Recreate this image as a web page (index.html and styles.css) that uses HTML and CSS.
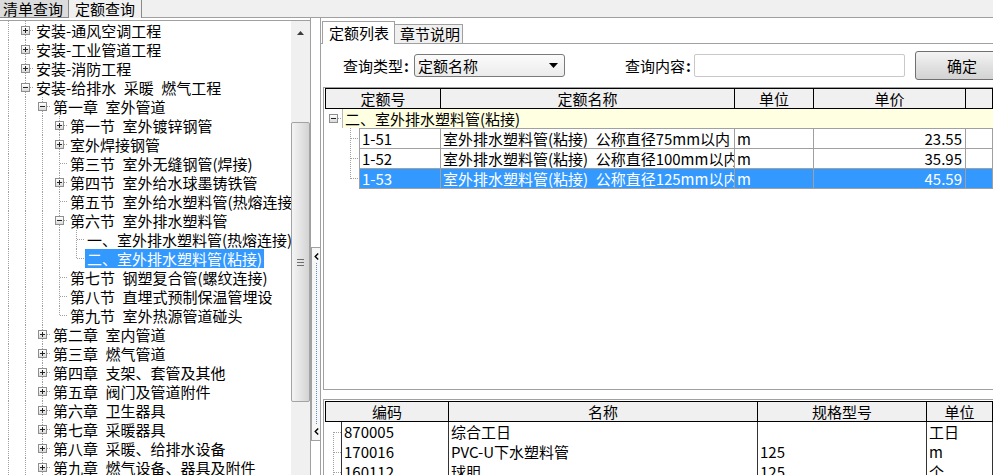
FILE: index.html
```html
<!DOCTYPE html>
<html lang="zh-CN">
<head>
    <meta charset="UTF-8">
    <title>定额查询</title>
    <link rel="stylesheet" href="styles.css">
</head>
<body>
    <div class="topbar">
        <div class="ttab">清单查询</div>
        <div class="ttab active">定额查询</div>
        <div class="tfill"></div>
    </div>

    <div class="main">
        <!-- chapter tree -->
        <div class="left">
            <div class="treebox">
                <div class="tree">
                    <div class="trow"><span class="tc v"></span><span class="tc t"><i class="bx p"></i></span><span class="tx">安装-通风空调工程</span></div>
                    <div class="trow"><span class="tc v"></span><span class="tc t"><i class="bx p"></i></span><span class="tx">安装-工业管道工程</span></div>
                    <div class="trow"><span class="tc v"></span><span class="tc t"><i class="bx p"></i></span><span class="tx">安装-消防工程</span></div>
                    <div class="trow"><span class="tc v"></span><span class="tc t"><i class="bx m"></i></span><span class="tx">安装-给排水&ensp;采暖&ensp;燃气工程</span></div>
                    <div class="trow"><span class="tc v"></span><span class="tc v"></span><span class="tc t"><i class="bx m"></i></span><span class="tx">第一章&ensp;室外管道</span></div>
                    <div class="trow"><span class="tc v"></span><span class="tc v"></span><span class="tc v"></span><span class="tc t"><i class="bx p"></i></span><span class="tx">第一节&ensp;室外镀锌钢管</span></div>
                    <div class="trow"><span class="tc v"></span><span class="tc v"></span><span class="tc v"></span><span class="tc t"><i class="bx p"></i></span><span class="tx">室外焊接钢管</span></div>
                    <div class="trow"><span class="tc v"></span><span class="tc v"></span><span class="tc v"></span><span class="tc t"></span><span class="tx">第三节&ensp;室外无缝钢管(焊接)</span></div>
                    <div class="trow"><span class="tc v"></span><span class="tc v"></span><span class="tc v"></span><span class="tc t"><i class="bx p"></i></span><span class="tx">第四节&ensp;室外给水球墨铸铁管</span></div>
                    <div class="trow"><span class="tc v"></span><span class="tc v"></span><span class="tc v"></span><span class="tc t"></span><span class="tx">第五节&ensp;室外给水塑料管(热熔连接)</span></div>
                    <div class="trow"><span class="tc v"></span><span class="tc v"></span><span class="tc v"></span><span class="tc t"><i class="bx m"></i></span><span class="tx">第六节&ensp;室外排水塑料管</span></div>
                    <div class="trow"><span class="tc v"></span><span class="tc v"></span><span class="tc v"></span><span class="tc v"></span><span class="tc t"></span><span class="tx">一、室外排水塑料管(热熔连接)</span></div>
                    <div class="trow"><span class="tc v"></span><span class="tc v"></span><span class="tc v"></span><span class="tc v"></span><span class="tc l"></span><span class="tx sel">二、室外排水塑料管(粘接)</span></div>
                    <div class="trow"><span class="tc v"></span><span class="tc v"></span><span class="tc v"></span><span class="tc t"></span><span class="tx">第七节&ensp;钢塑复合管(螺纹连接)</span></div>
                    <div class="trow"><span class="tc v"></span><span class="tc v"></span><span class="tc v"></span><span class="tc t"></span><span class="tx">第八节&ensp;直埋式预制保温管埋设</span></div>
                    <div class="trow"><span class="tc v"></span><span class="tc v"></span><span class="tc v"></span><span class="tc l"></span><span class="tx">第九节&ensp;室外热源管道碰头</span></div>
                    <div class="trow"><span class="tc v"></span><span class="tc v"></span><span class="tc t"><i class="bx p"></i></span><span class="tx">第二章&ensp;室内管道</span></div>
                    <div class="trow"><span class="tc v"></span><span class="tc v"></span><span class="tc t"><i class="bx p"></i></span><span class="tx">第三章&ensp;燃气管道</span></div>
                    <div class="trow"><span class="tc v"></span><span class="tc v"></span><span class="tc t"><i class="bx p"></i></span><span class="tx">第四章&ensp;支架、套管及其他</span></div>
                    <div class="trow"><span class="tc v"></span><span class="tc v"></span><span class="tc t"><i class="bx p"></i></span><span class="tx">第五章&ensp;阀门及管道附件</span></div>
                    <div class="trow"><span class="tc v"></span><span class="tc v"></span><span class="tc t"><i class="bx p"></i></span><span class="tx">第六章&ensp;卫生器具</span></div>
                    <div class="trow"><span class="tc v"></span><span class="tc v"></span><span class="tc t"><i class="bx p"></i></span><span class="tx">第七章&ensp;采暖器具</span></div>
                    <div class="trow"><span class="tc v"></span><span class="tc v"></span><span class="tc t"><i class="bx p"></i></span><span class="tx">第八章&ensp;采暖、给排水设备</span></div>
                    <div class="trow"><span class="tc v"></span><span class="tc v"></span><span class="tc t"><i class="bx p"></i></span><span class="tx">第九章&ensp;燃气设备、器具及附件</span></div>
                </div>
                <div class="vscroll">
                    <div class="sbtn"><svg width="7" height="4" viewBox="0 0 7 4"><path d="M0 4H7L3.5 0Z" fill="#3c3c3c"/></svg></div>
                    <div class="thumb"><svg width="7" height="7" viewBox="0 0 7 7"><path d="M0 0.5H7M0 3.5H7M0 6.5H7" stroke="#6e6e6e" stroke-width="1"/></svg></div>
                </div>
            </div>
        </div>

        <div class="splitter">
            <div class="handle">
                <svg width="5" height="7" viewBox="0 0 5 7"><path d="M4.2 0.5L1.2 3.5L4.2 6.5" fill="none" stroke="#000" stroke-width="1.4"/></svg>
                <div class="dots"></div>
                <svg width="5" height="7" viewBox="0 0 5 7"><path d="M4.2 0.5L1.2 3.5L4.2 6.5" fill="none" stroke="#000" stroke-width="1.4"/></svg>
            </div>
        </div>

        <div class="right">
            <div class="rtabs">
                <div class="rtab active">定额列表</div>
                <div class="rtab">章节说明</div>
            </div>

            <div class="query">
                <span class="qlabel">查询类型<b>:</b></span>
                <div class="select">
                    <span>定额名称</span>
                    <svg width="9" height="5" viewBox="0 0 9 5"><path d="M0 0H9L4.5 5Z" fill="#000"/></svg>
                </div>
                <span class="qlabel q2">查询内容<b>:</b></span>
                <div class="input"></div>
                <div class="btn">确定</div>
            </div>

            <!-- quota list -->
            <div class="grid g1">
                <div class="ghead">
                    <div>定额号</div>
                    <div>定额名称</div>
                    <div>单位</div>
                    <div>单价</div>
                    <div></div>
                </div>
                <div class="group">
                    <span class="tc h"><i class="bx m"></i></span>
                    <div class="gcell">二、室外排水塑料管(粘接)</div>
                </div>
                <div class="drow">
                    <span class="tc"></span><span class="tc t"></span>
                    <div class="cells">
                        <div>1-51</div>
                        <div>室外排水塑料管(粘接)&ensp;公称直径75mm以内</div>
                        <div>m</div>
                        <div class="num">23.55</div>
                        <div></div>
                    </div>
                </div>
                <div class="drow">
                    <span class="tc"></span><span class="tc t"></span>
                    <div class="cells">
                        <div>1-52</div>
                        <div>室外排水塑料管(粘接)&ensp;公称直径100mm以内</div>
                        <div>m</div>
                        <div class="num">35.95</div>
                        <div></div>
                    </div>
                </div>
                <div class="drow sel">
                    <span class="tc"></span><span class="tc l"></span>
                    <div class="cells">
                        <div>1-53</div>
                        <div>室外排水塑料管(粘接)&ensp;公称直径125mm以内</div>
                        <div>m</div>
                        <div class="num">45.59</div>
                        <div></div>
                    </div>
                </div>
            </div>

            <!-- materials of selected quota -->
            <div class="grid g2">
                <div class="ghead">
                    <div>编码</div>
                    <div>名称</div>
                    <div>规格型号</div>
                    <div>单位</div>
                </div>
                <div class="drow">
                    <span class="tc f"></span>
                    <div class="cells">
                        <div>870005</div>
                        <div>综合工日</div>
                        <div></div>
                        <div>工日</div>
                    </div>
                </div>
                <div class="drow">
                    <span class="tc t"></span>
                    <div class="cells">
                        <div>170016</div>
                        <div>PVC-U下水塑料管</div>
                        <div>125</div>
                        <div>m</div>
                    </div>
                </div>
                <div class="drow">
                    <span class="tc t"></span>
                    <div class="cells">
                        <div>160112</div>
                        <div>球胆</div>
                        <div>125</div>
                        <div>个</div>
                    </div>
                </div>
            </div>
        </div>
    </div>
</body>
</html>
```

FILE: styles.css
```css
:root {
    --vl: repeating-linear-gradient(to bottom, #a0a0a0 0 1px, transparent 1px 2px);
    --hl: repeating-linear-gradient(to right, #a0a0a0 0 1px, transparent 1px 2px);
}
body {
    margin: 0;
    width: 993px;
    height: 475px;
    overflow: hidden;
    font-family: "Noto Sans CJK SC", "Noto Sans", sans-serif;
    font-size: 15px;
    color: #000;
    background: #fff;
}

/* top tabs */
.topbar {
    display: flex;
    height: 18px;
    background: #f0f0f0;
}
.ttab {
    height: 17px;
    line-height: 17px;
    padding: 0 5px 0 3px;
    border-right: 1px solid #8a8a8a;
    border-bottom: 1px solid #8a8a8a;
    background: #dcdcdc;
    white-space: nowrap;
}
.ttab.active {
    height: 18px;
    padding: 0 6px 0 6px;
    border-bottom: 0;
    background: #f0f0f0;
}
.tfill {
    flex: 1;
    border-bottom: 1px solid #a0a0a0;
}

.main {
    display: flex;
    height: 457px;
}

/* left tree */
.left {
    width: 311px;
    flex: none;
    box-sizing: border-box;
    border-right: 1px solid #a0a0a0;
    padding-top: 2px;
    display: flex;
    flex-direction: column;
}
.treebox {
    flex: 1;
    min-height: 0;
    display: flex;
    border-top: 1px solid #a0a0a0;
}
.tree {
    flex: 1;
    min-width: 0;
    overflow: hidden;
    --mid: 9px;
}
.trow {
    display: flex;
    height: 19px;
    white-space: nowrap;
}
.tx {
    padding: 0 2px;
    line-height: 19px;
}
.tx.sel {
    background: #3399ff;
    color: #fff;
}

/* tree guide cells */
.tc {
    width: 17px;
    flex: none;
    display: flex;
    align-items: center;
    justify-content: center;
}
.tc.v {
    background: var(--vl) 8px 0 / 1px 100% no-repeat;
}
.tc.t {
    background: var(--hl) 9px var(--mid) / 8px 1px no-repeat, var(--vl) 8px 0 / 1px 100% no-repeat;
}
.tc.l {
    background: var(--hl) 9px var(--mid) / 8px 1px no-repeat, var(--vl) 8px 0 / 1px calc(var(--mid) + 1px) no-repeat;
}
.tc.f {
    background: var(--hl) 9px var(--mid) / 8px 1px no-repeat, var(--vl) 8px var(--mid) / 1px 100% no-repeat;
}
.tc.h {
    background: var(--hl) 9px var(--mid) / 8px 1px no-repeat;
}
.bx {
    width: 9px;
    height: 9px;
    box-sizing: border-box;
    border: 1px solid #8e8e8e;
    background: linear-gradient(#222, #222) center / 5px 1px no-repeat, linear-gradient(#fff, #dadada);
}
.bx.p {
    background: linear-gradient(#222, #222) center / 5px 1px no-repeat, linear-gradient(#222, #222) center / 1px 5px no-repeat, linear-gradient(#fff, #dadada);
}

/* scrollbar */
.vscroll {
    width: 19px;
    flex: none;
    background: #f0f0f0;
    display: flex;
    flex-direction: column;
}
.sbtn {
    height: 23px;
    display: flex;
    align-items: center;
    justify-content: center;
}
.thumb {
    margin-top: 78px;
    height: 280px;
    box-sizing: border-box;
    border: 1px solid #a3a3a3;
    border-radius: 2px;
    background: linear-gradient(to right, #f4f4f4, #e4e4e4 50%, #d3d3d3);
    display: flex;
    align-items: center;
    justify-content: center;
}

/* splitter */
.splitter {
    width: 9px;
    flex: none;
}
.handle {
    margin-top: 229px;
    height: 194px;
    box-sizing: border-box;
    border: 1px solid #a0a0a0;
    border-right: 0;
    background: #f7f7f7;
    display: flex;
    flex-direction: column;
    align-items: center;
    padding: 5px 0 5px;
}
.dots {
    flex: 1;
    width: 1px;
    margin: 3px 0;
    background: repeating-linear-gradient(to bottom, #5d8fd0 0 1px, transparent 1px 2px);
}

/* right side */
.right {
    flex: 1;
    min-width: 0;
    border-left: 1px solid #a0a0a0;
    display: flex;
    flex-direction: column;
    overflow: hidden;
}
.rtabs {
    display: flex;
    align-items: flex-end;
    height: 25px;
    flex: none;
    border-bottom: 1px solid #a0a0a0;
    padding-left: 1px;
}
.rtab {
    height: 18px;
    line-height: 18px;
    padding: 0 2px 0 5px;
    border: 1px solid #a0a0a0;
    border-left: 0;
    border-bottom: 0;
    background: #f0f0f0;
    white-space: nowrap;
}
.rtab.active {
    height: 22px;
    line-height: 21px;
    margin-bottom: -1px;
    padding: 0 5px 0 6px;
    border-left: 1px solid #a0a0a0;
    background: #fff;
}

.query {
    height: 43px;
    flex: none;
    display: flex;
    align-items: center;
    padding-left: 22px;
    white-space: nowrap;
}
.qlabel {
    width: 71px;
    flex: none;
}
.qlabel b {
    padding-left: 1px;
}
.q2 {
    margin-left: 60px;
    width: 69px;
}
.select {
    width: 151px;
    height: 23px;
    flex: none;
    box-sizing: border-box;
    border: 1px solid #7a7a7a;
    border-radius: 3px;
    background: linear-gradient(#fbfbfb, #ebebeb);
    display: flex;
    align-items: center;
    justify-content: space-between;
    padding: 0 6px 0 3px;
}
.input {
    width: 211px;
    height: 23px;
    flex: none;
    box-sizing: border-box;
    border: 1px solid #c8c8c8;
    border-radius: 2px;
    background: #fff;
}
.btn {
    margin-left: 10px;
    width: 94px;
    height: 29px;
    flex: none;
    box-sizing: border-box;
    border: 1px solid #707070;
    border-radius: 3px;
    background: linear-gradient(#f4f4f4, #e2e2e2 50%, #d3d3d3);
    display: flex;
    align-items: center;
    justify-content: center;
}

/* grids */
.grid {
    margin-left: 2px;
    border: 1px solid #a0a0a0;
    border-right: 0;
    padding-left: 1px;
    background: #fff;
    --mid: 10px;
    overflow: hidden;
}
.g1 {
    height: 303px;
    flex: none;
    box-sizing: border-box;
}
.g2 {
    margin-top: 9px;
    flex: 1;
    border-bottom: 0;
    padding-top: 1px;
}
.ghead {
    display: grid;
    height: 21px;
    box-sizing: border-box;
    border: 1px solid #000;
    border-right: 0;
    background: #f0f0f0;
}
.ghead > div {
    border-right: 1px solid #000;
    text-align: center;
    line-height: 19px;
    white-space: nowrap;
}
.g1 .ghead {
    grid-template-columns: 115px 294px 79px 152px 1fr;
}
.g2 .ghead {
    grid-template-columns: 123px 309px 169px 1fr;
}

.group {
    display: flex;
    height: 19px;
    --mid: 9px;
}
.gcell {
    flex: 1;
    background: #ffffe1;
    border-left: 1px solid #b8b8b8;
    padding-left: 2px;
    line-height: 19px;
    white-space: nowrap;
}

.drow {
    display: flex;
}
.cells {
    flex: 1;
    display: grid;
    border-left: 1px solid #a0a0a0;
    border-top: 1px solid #a0a0a0;
}
.cells > div {
    border-right: 1px solid #a0a0a0;
    padding: 0 2px;
    line-height: 19px;
    white-space: nowrap;
    overflow: hidden;
}
.cells > .num {
    text-align: right;
    padding-right: 3px;
}
.g1 .cells {
    grid-template-columns: 81px 294px 79px 152px 1fr;
}
.g1 .drow:last-child .cells {
    border-bottom: 1px solid #a0a0a0;
}
.drow.sel .cells > div {
    background: #3399ff;
    color: #fff;
}

.g2 .tc {
    width: 16px;
}
.g2 .cells {
    grid-template-columns: 107px 309px 169px 1fr;
    border-top: 0;
    border-left-color: #333;
}
.g2 .cells > div {
    border-right-color: #333;
    line-height: 20px;
}
```
